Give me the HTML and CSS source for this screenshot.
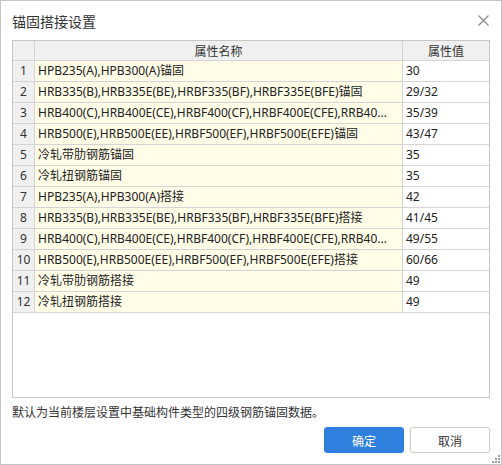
FILE: index.html
```html
<!DOCTYPE html>
<html lang="zh-CN">
<head>
<meta charset="utf-8">
<title>锚固搭接设置</title>
<link rel="stylesheet" href="styles.css">
</head>
<body>
<div class="dialog">
  <div class="titlebar">
    <span class="title">锚固搭接设置</span>
    <button class="close" aria-label="关闭">
      <svg width="11" height="11" viewBox="0 0 11 11"><path d="M0.5 0.5 L10.5 10.5 M10.5 0.5 L0.5 10.5" stroke="#8a8a8a" stroke-width="1.2" fill="none"/></svg>
    </button>
  </div>
  <div class="grid-wrap">
    <table class="grid">
      <colgroup><col class="c-no"><col class="c-name"><col class="c-val"></colgroup>
      <thead>
        <tr><th class="no"></th><th class="name">属性名称</th><th class="val">属性值</th></tr>
      </thead>
      <tbody>
        <tr><td class="no">1</td><td class="name">HPB235(A),HPB300(A)锚固</td><td class="val">30</td></tr>
        <tr><td class="no">2</td><td class="name">HRB335(B),HRB335E(BE),HRBF335(BF),HRBF335E(BFE)锚固</td><td class="val">29/32</td></tr>
        <tr><td class="no">3</td><td class="name" title="HRB400(C),HRB400E(CE),HRBF400(CF),HRBF400E(CFE),RRB400(D)锚固">HRB400(C),HRB400E(CE),HRBF400(CF),HRBF400E(CFE),RRB40...</td><td class="val">35/39</td></tr>
        <tr><td class="no">4</td><td class="name">HRB500(E),HRB500E(EE),HRBF500(EF),HRBF500E(EFE)锚固</td><td class="val">43/47</td></tr>
        <tr><td class="no">5</td><td class="name">冷轧带肋钢筋锚固</td><td class="val">35</td></tr>
        <tr><td class="no">6</td><td class="name">冷轧扭钢筋锚固</td><td class="val">35</td></tr>
        <tr><td class="no">7</td><td class="name">HPB235(A),HPB300(A)搭接</td><td class="val">42</td></tr>
        <tr><td class="no">8</td><td class="name">HRB335(B),HRB335E(BE),HRBF335(BF),HRBF335E(BFE)搭接</td><td class="val">41/45</td></tr>
        <tr><td class="no">9</td><td class="name" title="HRB400(C),HRB400E(CE),HRBF400(CF),HRBF400E(CFE),RRB400(D)搭接">HRB400(C),HRB400E(CE),HRBF400(CF),HRBF400E(CFE),RRB40...</td><td class="val">49/55</td></tr>
        <tr><td class="no">10</td><td class="name">HRB500(E),HRB500E(EE),HRBF500(EF),HRBF500E(EFE)搭接</td><td class="val">60/66</td></tr>
        <tr><td class="no">11</td><td class="name">冷轧带肋钢筋搭接</td><td class="val">49</td></tr>
        <tr><td class="no">12</td><td class="name">冷轧扭钢筋搭接</td><td class="val">49</td></tr>
      </tbody>
    </table>
  </div>
  <p class="note">默认为当前楼层设置中基础构件类型的四级钢筋锚固数据。</p>
  <div class="actions">
    <button class="btn primary">确定</button>
    <button class="btn">取消</button>
  </div>
  <span class="grip">
    <svg width="9" height="9" viewBox="0 0 9 9" fill="#9a9a9a">
      <rect x="7" y="1" width="2" height="2"/>
      <rect x="4" y="4" width="2" height="2"/><rect x="7" y="4" width="2" height="2"/>
      <rect x="1" y="7" width="2" height="2"/><rect x="4" y="7" width="2" height="2"/><rect x="7" y="7" width="2" height="2"/>
    </svg>
  </span>
</div>
</body>
</html>
```
FILE: styles.css
```css
* { box-sizing: border-box; }
html, body { margin: 0; padding: 0; background: #ffffff; }
body {
  font-family: "Noto Sans", "Noto Sans CJK SC", sans-serif;
  font-size: 12px;
  color: #222;
}
.dialog {
  position: relative;
  width: 502px;
  height: 465px;
  border: 1px solid #c4c4c4;
  background: #fff;
  display: flex;
  flex-direction: column;
}
.titlebar {
  height: 39px;
  display: flex;
  align-items: center;
  justify-content: space-between;
  padding: 1px 12px 0 11px;
}
.title {
  font-size: 14px;
  color: #333;
  font-family: "Noto Sans CJK SC", sans-serif;
}
.close {
  border: 0;
  background: none;
  padding: 0;
  width: 11px;
  height: 11px;
  display: flex;
  margin-top: -2px;
}
.grid-wrap {
  margin: 0 11px;
  height: 358px;
  border: 1px solid #c6c6c6;
  overflow: hidden;
}
.grid {
  border-collapse: separate;
  border-spacing: 0;
  table-layout: fixed;
  width: 476px;
}
.c-no { width: 22px; }
.c-name { width: 368px; }
.c-val { width: 86px; }
.grid th, .grid td {
  padding: 0;
  border-right: 1px solid #d4d4d4;
  border-bottom: 1px solid #d4d4d4;
  white-space: nowrap;
  font-weight: normal;
  line-height: 20px;
  height: 21px;
}
.grid th {
  height: 20px;
  line-height: 19px;
  background: #f0f0f0;
  text-align: center;
  color: #333;
  font-family: "Noto Sans CJK SC", sans-serif;
}
.grid th.val, .grid td.val { border-right: 0; }
.grid td.no {
  background: #f0f0f0;
  text-align: center;
  color: #333;
}
.grid td.name {
  background: #fffde8;
  padding-left: 3px;
}
.grid td.val {
  background: #fff;
  padding-left: 3px;
}
.note {
  margin: 6px 0 0 11px;
  line-height: 16px;
  height: 16px;
  color: #333;
  font-family: "Noto Sans CJK SC", sans-serif;
}
.actions {
  margin-top: 7px;
  display: flex;
  justify-content: flex-end;
  gap: 6px;
  padding: 0 11px;
}
.btn {
  width: 80px;
  height: 26px;
  border: 1px solid #c8c8c8;
  border-radius: 3px;
  background: #fff;
  color: #333;
  font-family: "Noto Sans CJK SC", sans-serif;
  font-size: 12px;
  padding: 0;
}
.btn.primary {
  background: #2f80de;
  border-color: #2f80de;
  color: #fff;
}
.grip {
  position: absolute;
  right: 1px;
  bottom: 1px;
  width: 9px;
  height: 9px;
  display: flex;
}
```
